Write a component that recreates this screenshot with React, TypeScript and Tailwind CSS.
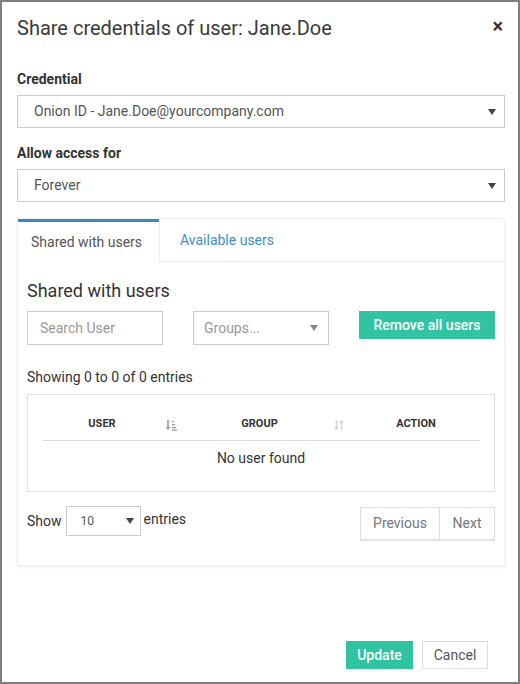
import React from "react";

function Caret({ className = "" }: { className?: string }) {
  return (
    <svg width="8" height="6" viewBox="0 0 8 6" className={className}>
      <path d="M0 0h8L4 6z" fill="currentColor" />
    </svg>
  );
}

function SortAsc() {
  return (
    <svg width="12" height="12" viewBox="0 0 12 12" className="text-[#9a9a9a]">
      <path d="M3 1v8" stroke="currentColor" strokeWidth="1.6" />
      <path d="M0.5 8h5L3 11z" fill="currentColor" />
      <rect x="7" y="2" width="2" height="1.3" fill="currentColor" />
      <rect x="7" y="5" width="3" height="1.3" fill="currentColor" />
      <rect x="7" y="8" width="4" height="1.3" fill="currentColor" />
      <rect x="7" y="10.5" width="5" height="1.3" fill="currentColor" />
    </svg>
  );
}

function SortBoth() {
  return (
    <svg width="12" height="12" viewBox="0 0 12 12" className="text-[#d4d4d4]">
      <path d="M3.5 1v8" stroke="currentColor" strokeWidth="1.6" />
      <path d="M1 8h5L3.5 11z" fill="currentColor" />
      <path d="M8.5 3v8" stroke="currentColor" strokeWidth="1.6" />
      <path d="M6 4h5L8.5 1z" fill="currentColor" />
    </svg>
  );
}

function SelectBox({ value }: { value: string }) {
  return (
    <div className="flex h-[33px] items-center justify-between border border-[#ccc] bg-white pl-[16px] pr-[8px] text-[14px] text-[#555]">
      <span>{value}</span>
      <Caret className="text-[#444]" />
    </div>
  );
}

export default function App() {
  return (
    <div
      className="flex h-[684px] w-[520px] flex-col border-2 border-[#7f7f7f] bg-white pl-[15px] pr-[13px] text-[#333]"
      style={{ fontFamily: "Roboto, 'Liberation Sans', sans-serif" }}
    >
      <div className="flex items-start justify-between pt-[15px]">
        <h1 className="text-[20px] leading-[22px] font-normal text-[#3a3a3a]">
          Share credentials of user: Jane.Doe
        </h1>
        <span className="mr-[2px] mt-[-2px] text-[20px] leading-[22px] font-bold text-[#333]">×</span>
      </div>

      <label className="mt-[30px] mb-[6px] text-[14px] leading-[20px] font-bold text-[#333]">Credential</label>
      <SelectBox value="Onion ID - Jane.Doe@yourcompany.com" />

      <label className="mt-[15px] mb-[6px] text-[14px] leading-[20px] font-bold text-[#333]">Allow access for</label>
      <SelectBox value="Forever" />

      <div className="mt-[16px] flex flex-col border border-[#f2f2f2] bg-white shadow-[0_1px_3px_rgba(0,0,0,0.08)]">
        <div className="flex h-[43px]">
          <div className="flex w-[141px] items-center border-t-[3px] border-[#3b88bf] pl-[13px] text-[14px] text-[#555]">
            Shared with users
          </div>
          <div className="flex flex-1 items-center border-b border-l border-[#eee] pl-[20px] text-[14px] text-[#3d8fcc]">
            Available users
          </div>
        </div>

        <div className="flex flex-col px-[9px] pt-[18px] pb-[24px]">
          <h2 className="text-[18px] leading-[22px] font-normal text-[#333]">Shared with users</h2>
          <div className="mt-[9px] grid grid-cols-3 items-start gap-[30px]">
            <div className="flex h-[34px] items-center border border-[#ccc] pl-[12px] text-[14px] text-[#999]">
              Search User
            </div>
            <div className="flex h-[34px] items-center justify-between border border-[#ccc] pr-[10px] pl-[10px] text-[14px] text-[#999]">
              <span>Groups...</span>
              <Caret className="text-[#888]" />
            </div>
            <button className="h-[28px] bg-[#31c3a2] text-[14px] font-medium text-white">Remove all users</button>
          </div>

          <p className="mt-[22px] text-[14px] leading-[20px] text-[#333]">Showing 0 to 0 of 0 entries</p>

          <div className="mt-[7px] flex flex-col border border-[#dde3e3] px-[14px] pt-[14px] pb-[16px]">
            <div className="flex h-[32px] items-center border-b border-[#ddd] text-[11px] font-bold text-[#333]">
              <div className="flex w-[144px] items-center">
                <span className="flex-1 pr-[3px] text-center">USER</span>
                <span className="mr-[9px]"><SortAsc /></span>
              </div>
              <div className="flex w-[166px] items-center">
                <span className="flex-1 pl-[30px] text-center">GROUP</span>
                <span className="ml-[30px] mr-[7px]"><SortBoth /></span>
              </div>
              <div className="flex-1 text-center">ACTION</div>
            </div>
            <div className="flex h-[34px] items-center justify-center text-[14px] text-[#333]">No user found</div>
          </div>

          <div className="mt-[13px] flex items-start justify-between">
            <div className="flex items-center pt-[1px] text-[14px] text-[#333]">
              <span>Show</span>
              <div className="ml-[4px] mr-[3px] flex h-[30px] w-[75px] items-center justify-between border border-[#ccc] pl-[14px] pr-[6px] text-[12px] text-[#555]">
                <span>10</span>
                <Caret className="text-[#444]" />
              </div>
              <span className="-mt-[4px]">entries</span>
            </div>
            <div className="mt-[2px] flex h-[34px] border border-[#ddd] border-b-2 border-b-[#e3e3e3] text-[14px] text-[#777]">
              <span className="flex w-[79px] items-center justify-center border-r border-[#ddd]">Previous</span>
              <span className="flex w-[54px] items-center justify-center">Next</span>
            </div>
          </div>
        </div>
      </div>

      <div className="mt-auto mb-[13px] flex justify-end gap-[9px] pr-[17px]">
        <button className="h-[28px] w-[67px] bg-[#2fc3a1] text-[14px] font-medium text-white">Update</button>
        <button className="h-[28px] w-[66px] border border-[#ddd] bg-white text-[14px] text-[#555]">Cancel</button>
      </div>
    </div>
  );
}
